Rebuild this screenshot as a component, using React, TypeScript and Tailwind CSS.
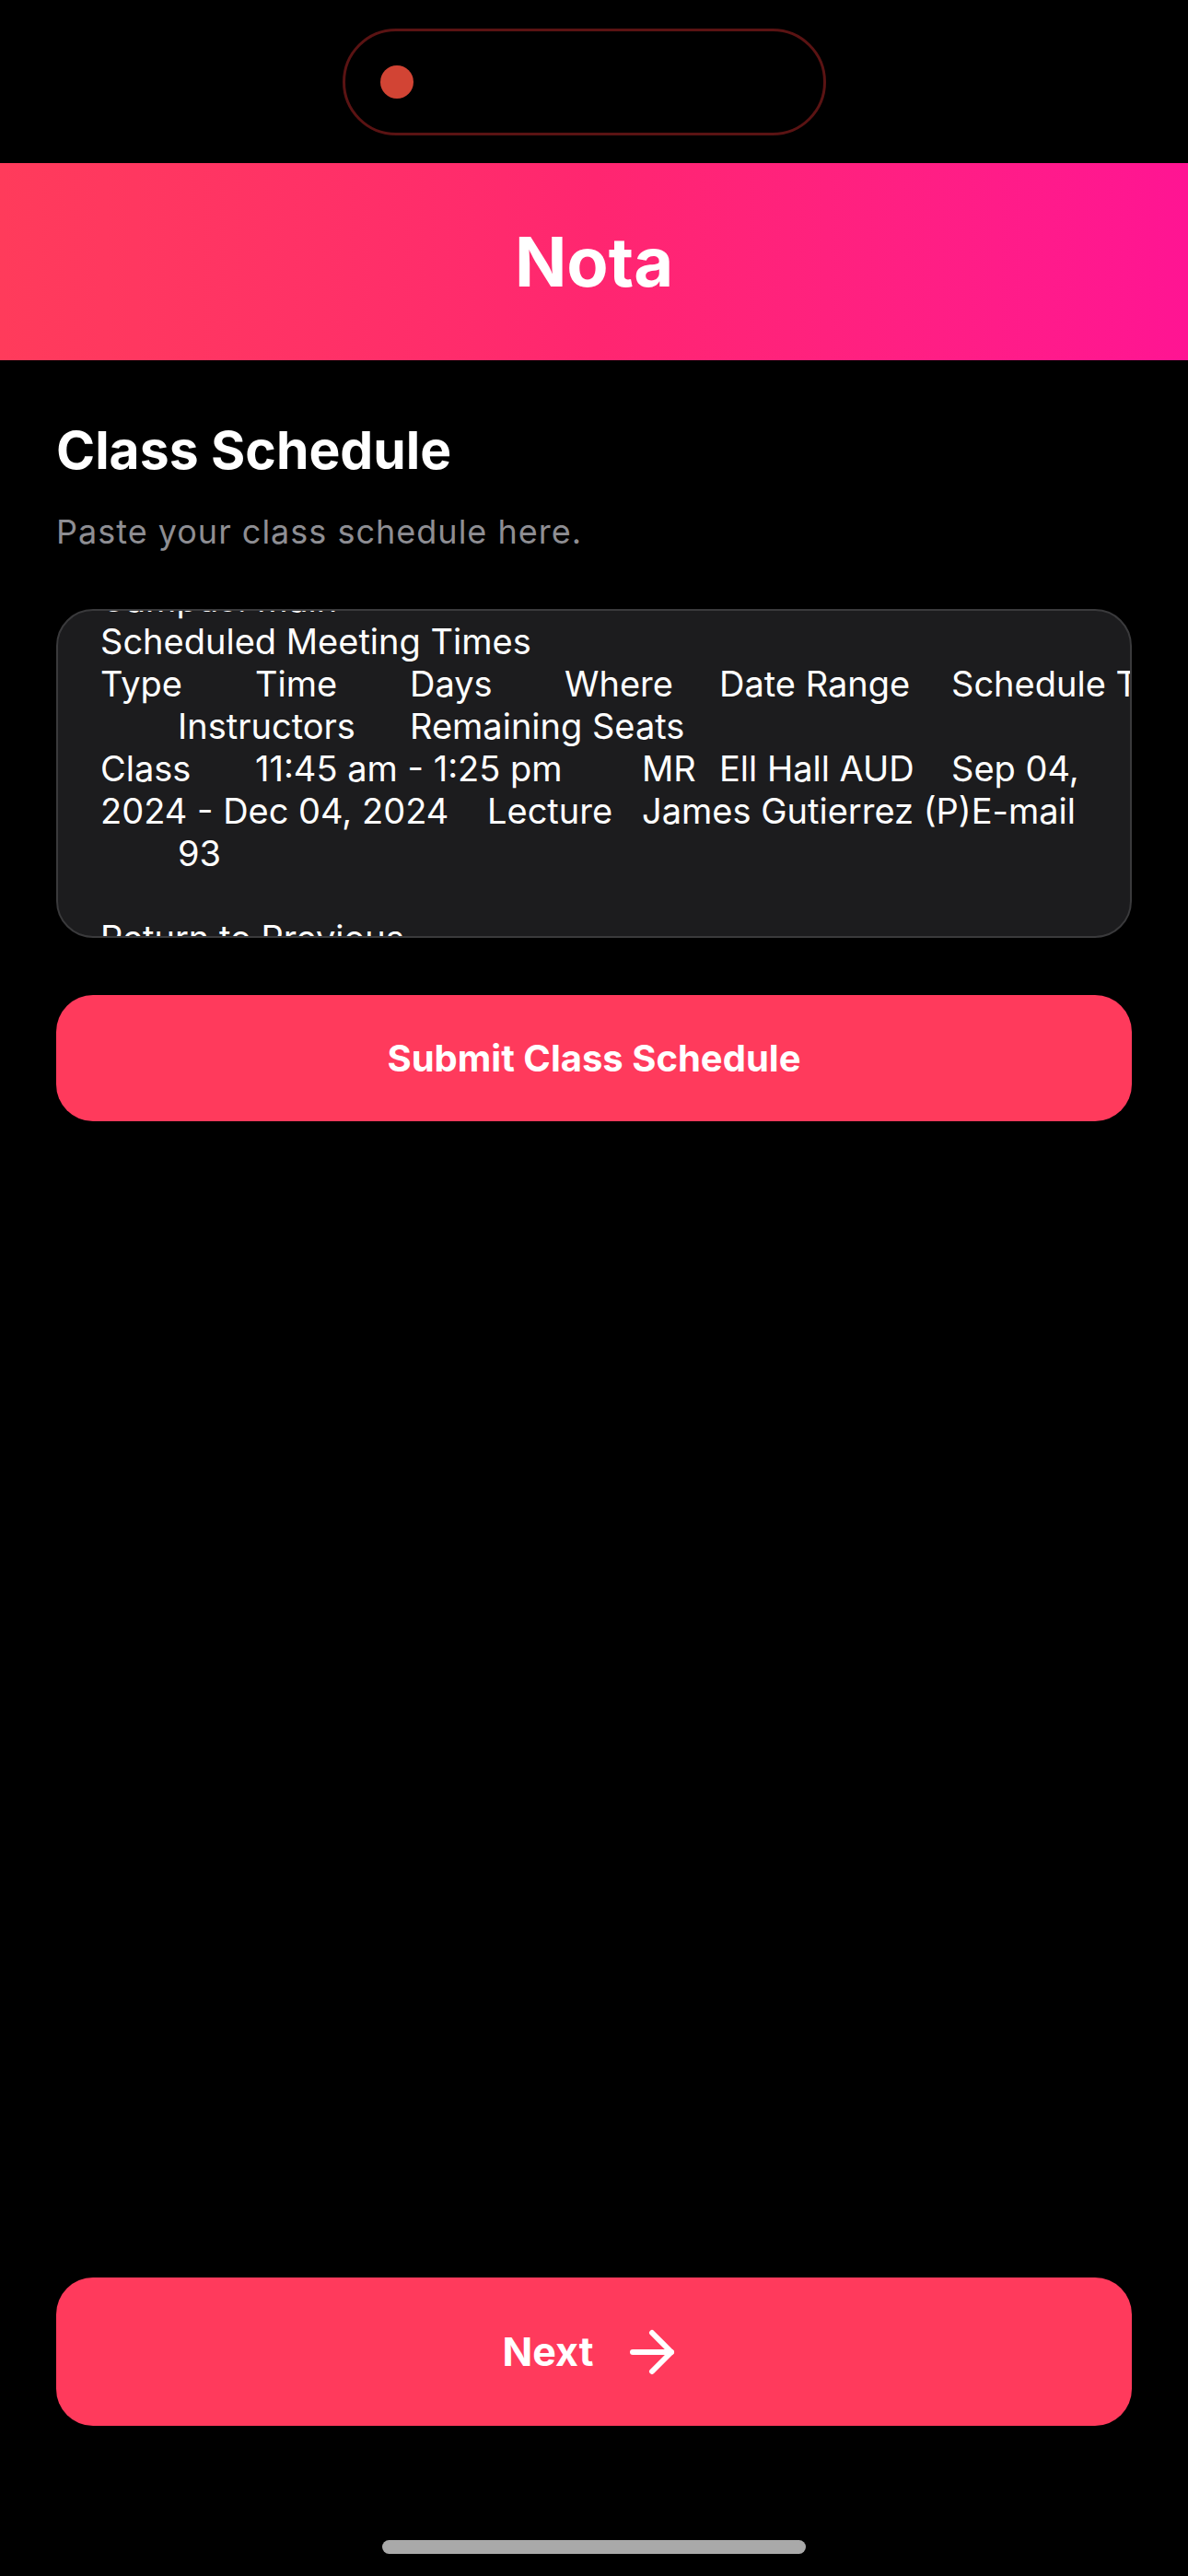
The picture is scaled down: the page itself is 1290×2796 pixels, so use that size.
import { ArrowRight } from 'lucide-react';

type Cell = { col: number; text: string };

// tab stops in the pasted text are 84px apart
const TAB = 84;

const lines: Cell[][] = [
  [{ col: 0, text: 'Scheduled Meeting Times' }],
  [
    { col: 0, text: 'Type' },
    { col: 2, text: 'Time' },
    { col: 4, text: 'Days' },
    { col: 6, text: 'Where' },
    { col: 8, text: 'Date Range' },
    { col: 11, text: 'Schedule Type' },
  ],
  [
    { col: 1, text: 'Instructors' },
    { col: 4, text: 'Remaining Seats' },
  ],
  [
    { col: 0, text: 'Class' },
    { col: 2, text: '11:45 am - 1:25 pm' },
    { col: 7, text: 'MR' },
    { col: 8, text: 'Ell Hall AUD' },
    { col: 11, text: 'Sep 04,' },
  ],
  [
    { col: 0, text: '2024 - Dec 04, 2024' },
    { col: 5, text: 'Lecture' },
    { col: 7, text: 'James Gutierrez (P)E-mail' },
  ],
  [{ col: 1, text: '93' }],
  [],
  [{ col: 0, text: 'Return to Previous' }],
];

function Line({ cells }: { cells: Cell[] }) {
  if (cells.length === 0) return <div className="h-[46px]" />;
  return (
    <div className="flex h-[46px] whitespace-nowrap">
      <span className="shrink-0" style={{ width: cells[0].col * TAB }} />
      {cells.map((c, i) => {
        const next = cells[i + 1];
        return (
          <span
            key={i}
            className="shrink-0"
            style={next ? { width: (next.col - c.col) * TAB } : undefined}
          >
            {c.text}
          </span>
        );
      })}
    </div>
  );
}

export default function App() {
  return (
    <div className="min-h-[2796px] bg-black flex flex-col font-['Inter','Noto_Sans',sans-serif] text-white">
      {/* status bar / island */}
      <div className="h-[177px] pt-[31px] pl-[372px]">
        <div className="w-[525px] h-[116px] rounded-full border-[3px] border-[#5a1313] bg-black flex items-center pl-[38px]">
          <div className="w-[36px] h-[36px] rounded-full bg-[#d24434]" />
        </div>
      </div>

      {/* header */}
      <div className="h-[214px] bg-linear-to-r from-[#ff3b5b] via-[#ff2670] to-[#ff1493] flex items-center justify-center">
        <h1 className="text-[74px] leading-none font-bold">Nota</h1>
      </div>

      <main className="flex-1 flex flex-col px-[61px] pt-[64px]">
        <h2 className="text-[57px] leading-[68px] font-bold">Class Schedule</h2>
        <p className="mt-[34px] text-[36px] leading-[40px] tracking-[1px] text-[#8e8e93]">
          Paste your class schedule here.
        </p>

        {/* pasted schedule, scrolled */}
        <div className="mt-[64px] h-[357px] rounded-[40px] border-2 border-[#3a3a3c] bg-[#1c1c1e] overflow-hidden pl-[46px]">
          <div className="-mt-[36px] text-[38px] leading-[46px] text-white">
            {/* line scrolled almost out of view */}
            <div className="h-[46px] whitespace-nowrap">
              <div className="-mt-[7px]">Campus: Main</div>
            </div>
            {lines.map((cells, i) => (
              <Line key={i} cells={cells} />
            ))}
          </div>
        </div>

        <button className="mt-[62px] h-[137px] rounded-[40px] bg-[#ff3a5c] text-[40px] font-bold text-white">
          Submit Class Schedule
        </button>

        <div className="flex-1" />

        <button className="h-[161px] rounded-[40px] bg-[#ff3a5c] flex items-center justify-center text-[43px] font-bold text-white">
          <span>Next</span>
          <ArrowRight size={72} strokeWidth={2} className="ml-[28px]" />
        </button>

        <div className="mt-[124px] mb-[24px] mx-auto w-[460px] h-[15px] rounded-full bg-[#a9a9a9]" />
      </main>
    </div>
  );
}
